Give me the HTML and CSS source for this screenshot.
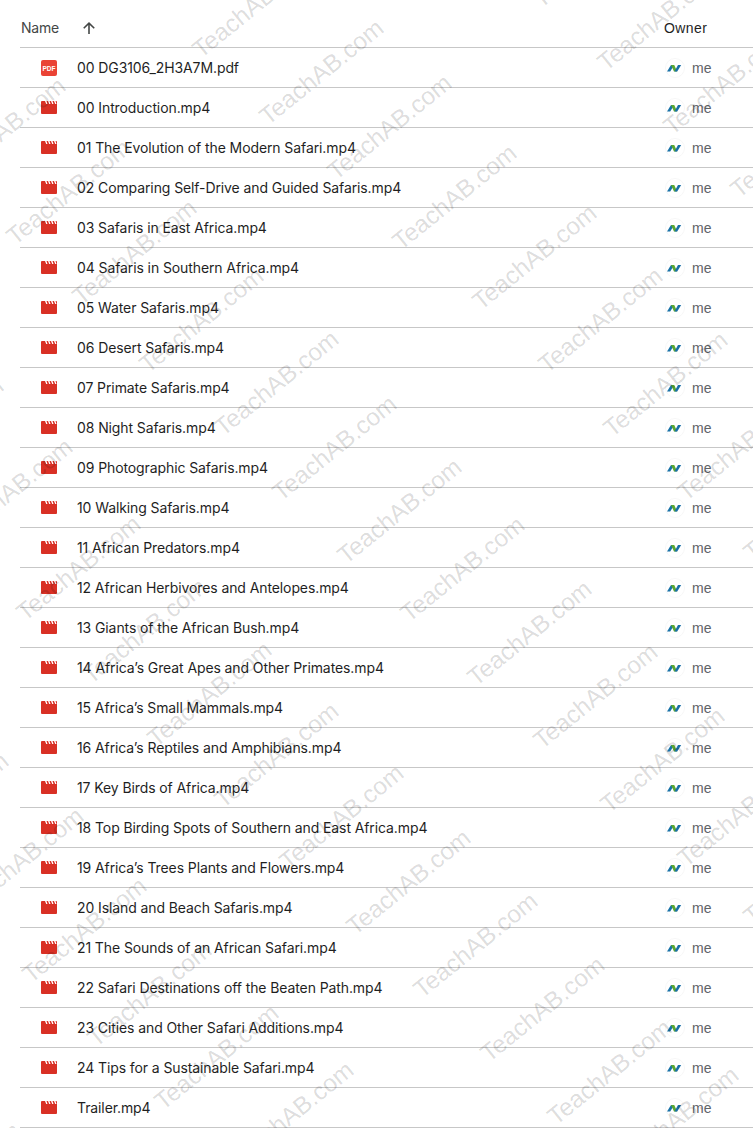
FILE: index.html
```html
<!DOCTYPE html>
<html lang="en">
<head>
    <meta charset="UTF-8">
    <meta name="viewport" content="width=device-width, initial-scale=1.0">
    <title>Safari course files</title>
    <link rel="stylesheet" href="styles.css">
</head>
<body>

    <!-- Shared icons -->
    <svg class="icon-defs" width="0" height="0" aria-hidden="true">
        <symbol id="iconVideo" viewBox="0 0 16 13">
            <path fill="#d93025" d="M1 0h14a1 1 0 0 1 1 1v11a1 1 0 0 1-1 1H1a1 1 0 0 1-1-1V1a1 1 0 0 1 1-1z"/>
            <path fill="#fff" d="M4 0h1.500l1 3H5.200zM7 0h1.500l1 3H8.200zM10 0h1.500l1 3h-1.300zM13 0h1.500l1 3h-1.300z"/>
        </symbol>
        <symbol id="iconOwner" viewBox="0 0 20 20">
            <circle cx="10" cy="10" r="9.500" fill="#fff" stroke="#f7f7f7"/>
            <path fill="#1a73a8" d="M2 13.500 6 7h3.200L5.200 13.500z"/>
            <path fill="#5aa832" d="M6 7h3.200l3 6.500H9z"/>
            <path fill="#1a6fa8" d="M9.500 13.500 13 7h3.200l-4 6.500z"/>
        </symbol>
    </svg>

    <div class="page">
        <!-- Column headers -->
        <div class="list-head">
            <div class="col-name">
                <span>Name</span>
                <svg class="sort-arrow" width="16" height="16" viewBox="0 0 16 16">
                    <path fill="#444746" d="M7.200 14V4.900L3.300 8.800 2.200 7.700 8 1.900l5.800 5.800-1.100 1.100-3.900-3.900V14z"/>
                </svg>
            </div>
            <div class="col-owner">Owner</div>
        </div>

        <!-- File rows -->
        <div class="row">
            <svg class="file-icon" width="16" height="16" viewBox="0 0 16 16">
                <rect width="16" height="16" rx="2" fill="#ea4335"/>
                <text class="pdf-label" x="8" y="10.500" text-anchor="middle">PDF</text>
            </svg>
            <span class="file-name">00 DG3106_2H3A7M.pdf</span>
            <div class="owner"><svg class="owner-icon"><use href="#iconOwner"/></svg><span>me</span></div>
        </div>
        <div class="row"><svg class="file-icon video"><use href="#iconVideo"/></svg><span class="file-name">00 Introduction.mp4</span><div class="owner"><svg class="owner-icon"><use href="#iconOwner"/></svg><span>me</span></div></div>
        <div class="row"><svg class="file-icon video"><use href="#iconVideo"/></svg><span class="file-name">01 The Evolution of the Modern Safari.mp4</span><div class="owner"><svg class="owner-icon"><use href="#iconOwner"/></svg><span>me</span></div></div>
        <div class="row"><svg class="file-icon video"><use href="#iconVideo"/></svg><span class="file-name">02 Comparing Self-Drive and Guided Safaris.mp4</span><div class="owner"><svg class="owner-icon"><use href="#iconOwner"/></svg><span>me</span></div></div>
        <div class="row"><svg class="file-icon video"><use href="#iconVideo"/></svg><span class="file-name">03 Safaris in East Africa.mp4</span><div class="owner"><svg class="owner-icon"><use href="#iconOwner"/></svg><span>me</span></div></div>
        <div class="row"><svg class="file-icon video"><use href="#iconVideo"/></svg><span class="file-name">04 Safaris in Southern Africa.mp4</span><div class="owner"><svg class="owner-icon"><use href="#iconOwner"/></svg><span>me</span></div></div>
        <div class="row"><svg class="file-icon video"><use href="#iconVideo"/></svg><span class="file-name">05 Water Safaris.mp4</span><div class="owner"><svg class="owner-icon"><use href="#iconOwner"/></svg><span>me</span></div></div>
        <div class="row"><svg class="file-icon video"><use href="#iconVideo"/></svg><span class="file-name">06 Desert Safaris.mp4</span><div class="owner"><svg class="owner-icon"><use href="#iconOwner"/></svg><span>me</span></div></div>
        <div class="row"><svg class="file-icon video"><use href="#iconVideo"/></svg><span class="file-name">07 Primate Safaris.mp4</span><div class="owner"><svg class="owner-icon"><use href="#iconOwner"/></svg><span>me</span></div></div>
        <div class="row"><svg class="file-icon video"><use href="#iconVideo"/></svg><span class="file-name">08 Night Safaris.mp4</span><div class="owner"><svg class="owner-icon"><use href="#iconOwner"/></svg><span>me</span></div></div>
        <div class="row"><svg class="file-icon video"><use href="#iconVideo"/></svg><span class="file-name">09 Photographic Safaris.mp4</span><div class="owner"><svg class="owner-icon"><use href="#iconOwner"/></svg><span>me</span></div></div>
        <div class="row"><svg class="file-icon video"><use href="#iconVideo"/></svg><span class="file-name">10 Walking Safaris.mp4</span><div class="owner"><svg class="owner-icon"><use href="#iconOwner"/></svg><span>me</span></div></div>
        <div class="row"><svg class="file-icon video"><use href="#iconVideo"/></svg><span class="file-name">11 African Predators.mp4</span><div class="owner"><svg class="owner-icon"><use href="#iconOwner"/></svg><span>me</span></div></div>
        <div class="row"><svg class="file-icon video"><use href="#iconVideo"/></svg><span class="file-name">12 African Herbivores and Antelopes.mp4</span><div class="owner"><svg class="owner-icon"><use href="#iconOwner"/></svg><span>me</span></div></div>
        <div class="row"><svg class="file-icon video"><use href="#iconVideo"/></svg><span class="file-name">13 Giants of the African Bush.mp4</span><div class="owner"><svg class="owner-icon"><use href="#iconOwner"/></svg><span>me</span></div></div>
        <div class="row"><svg class="file-icon video"><use href="#iconVideo"/></svg><span class="file-name">14 Africa’s Great Apes and Other Primates.mp4</span><div class="owner"><svg class="owner-icon"><use href="#iconOwner"/></svg><span>me</span></div></div>
        <div class="row"><svg class="file-icon video"><use href="#iconVideo"/></svg><span class="file-name">15 Africa’s Small Mammals.mp4</span><div class="owner"><svg class="owner-icon"><use href="#iconOwner"/></svg><span>me</span></div></div>
        <div class="row"><svg class="file-icon video"><use href="#iconVideo"/></svg><span class="file-name">16 Africa’s Reptiles and Amphibians.mp4</span><div class="owner"><svg class="owner-icon"><use href="#iconOwner"/></svg><span>me</span></div></div>
        <div class="row"><svg class="file-icon video"><use href="#iconVideo"/></svg><span class="file-name">17 Key Birds of Africa.mp4</span><div class="owner"><svg class="owner-icon"><use href="#iconOwner"/></svg><span>me</span></div></div>
        <div class="row"><svg class="file-icon video"><use href="#iconVideo"/></svg><span class="file-name">18 Top Birding Spots of Southern and East Africa.mp4</span><div class="owner"><svg class="owner-icon"><use href="#iconOwner"/></svg><span>me</span></div></div>
        <div class="row"><svg class="file-icon video"><use href="#iconVideo"/></svg><span class="file-name">19 Africa’s Trees Plants and Flowers.mp4</span><div class="owner"><svg class="owner-icon"><use href="#iconOwner"/></svg><span>me</span></div></div>
        <div class="row"><svg class="file-icon video"><use href="#iconVideo"/></svg><span class="file-name">20 Island and Beach Safaris.mp4</span><div class="owner"><svg class="owner-icon"><use href="#iconOwner"/></svg><span>me</span></div></div>
        <div class="row"><svg class="file-icon video"><use href="#iconVideo"/></svg><span class="file-name">21 The Sounds of an African Safari.mp4</span><div class="owner"><svg class="owner-icon"><use href="#iconOwner"/></svg><span>me</span></div></div>
        <div class="row"><svg class="file-icon video"><use href="#iconVideo"/></svg><span class="file-name">22 Safari Destinations off the Beaten Path.mp4</span><div class="owner"><svg class="owner-icon"><use href="#iconOwner"/></svg><span>me</span></div></div>
        <div class="row"><svg class="file-icon video"><use href="#iconVideo"/></svg><span class="file-name">23 Cities and Other Safari Additions.mp4</span><div class="owner"><svg class="owner-icon"><use href="#iconOwner"/></svg><span>me</span></div></div>
        <div class="row"><svg class="file-icon video"><use href="#iconVideo"/></svg><span class="file-name">24 Tips for a Sustainable Safari.mp4</span><div class="owner"><svg class="owner-icon"><use href="#iconOwner"/></svg><span>me</span></div></div>
        <div class="row"><svg class="file-icon video"><use href="#iconVideo"/></svg><span class="file-name">Trailer.mp4</span><div class="owner"><svg class="owner-icon"><use href="#iconOwner"/></svg><span>me</span></div></div>

        <!-- Watermark layer, lies over the list -->
        <svg class="watermark" width="753" height="1128" viewBox="0 0 753 1128" aria-hidden="true">
            <g transform="translate(8 4)">
                <text transform="translate(193 55) rotate(-39)">TeachAB.com</text>
                <text transform="translate(260 122) rotate(-39)">TeachAB.com</text>
                <text transform="translate(328 177) rotate(-39)">TeachAB.com</text>
                <text transform="translate(393 247) rotate(-39)">TeachAB.com</text>
                <text transform="translate(473 307) rotate(-39)">TeachAB.com</text>
                <text transform="translate(539 370) rotate(-39)">TeachAB.com</text>
                <text transform="translate(604 434) rotate(-39)">TeachAB.com</text>
                <text transform="translate(678 498) rotate(-39)">TeachAB.com</text>
                <text transform="translate(744 558) rotate(-39)">TeachAB.com</text>
                <text transform="translate(533 5) rotate(-39)">TeachAB.com</text>
                <text transform="translate(598 68) rotate(-39)">TeachAB.com</text>
                <text transform="translate(664 132) rotate(-39)">TeachAB.com</text>
                <text transform="translate(731 195) rotate(-39)">TeachAB.com</text>
                <text transform="translate(-58 180) rotate(-39)">TeachAB.com</text>
                <text transform="translate(7 242) rotate(-39)">TeachAB.com</text>
                <text transform="translate(73 302) rotate(-39)">TeachAB.com</text>
                <text transform="translate(140 370) rotate(-39)">TeachAB.com</text>
                <text transform="translate(215 433) rotate(-39)">TeachAB.com</text>
                <text transform="translate(273 498) rotate(-39)">TeachAB.com</text>
                <text transform="translate(338 561) rotate(-39)">TeachAB.com</text>
                <text transform="translate(401 619) rotate(-39)">TeachAB.com</text>
                <text transform="translate(468 683) rotate(-39)">TeachAB.com</text>
                <text transform="translate(534 746) rotate(-39)">TeachAB.com</text>
                <text transform="translate(601 810) rotate(-39)">TeachAB.com</text>
                <text transform="translate(678 864) rotate(-39)">TeachAB.com</text>
                <text transform="translate(744 922) rotate(-39)">TeachAB.com</text>
                <text transform="translate(-120 480) rotate(-39)">TeachAB.com</text>
                <text transform="translate(-51 541) rotate(-39)">TeachAB.com</text>
                <text transform="translate(17 618) rotate(-39)">TeachAB.com</text>
                <text transform="translate(83 681) rotate(-39)">TeachAB.com</text>
                <text transform="translate(148 744) rotate(-39)">TeachAB.com</text>
                <text transform="translate(215 805) rotate(-39)">TeachAB.com</text>
                <text transform="translate(280 867) rotate(-39)">TeachAB.com</text>
                <text transform="translate(347 932) rotate(-39)">TeachAB.com</text>
                <text transform="translate(414 995) rotate(-39)">TeachAB.com</text>
                <text transform="translate(481 1059) rotate(-39)">TeachAB.com</text>
                <text transform="translate(548 1122) rotate(-39)">TeachAB.com</text>
                <text transform="translate(615 1169) rotate(-39)">TeachAB.com</text>
                <text transform="translate(-115 855) rotate(-39)">TeachAB.com</text>
                <text transform="translate(-40 910) rotate(-39)">TeachAB.com</text>
                <text transform="translate(23 980) rotate(-39)">TeachAB.com</text>
                <text transform="translate(88 1044) rotate(-39)">TeachAB.com</text>
                <text transform="translate(155 1107) rotate(-39)">TeachAB.com</text>
                <text transform="translate(230 1164) rotate(-39)">TeachAB.com</text>
                <text transform="translate(-103 1225) rotate(-39)">TeachAB.com</text>
                <text transform="translate(286 1227) rotate(-39)">TeachAB.com</text>
            </g>
        </svg>
    </div>
</body>
</html>
```

FILE: styles.css
```css
/* Global Reset */
* {
    margin: 0;
    padding: 0;
    box-sizing: border-box;
}

body {
    background: #fff;
    font-family: 'Inter', 'Roboto', sans-serif;
    font-size: 14px;
    color: #1f1f1f;
}

.icon-defs {
    position: absolute;
}

.page {
    position: relative;
    width: 753px;
    height: 1128px;
    overflow: hidden;
}

/* Column headers */
.list-head {
    display: flex;
    align-items: center;
    justify-content: space-between;
    height: 48px;
    margin-left: 20px;
    padding-left: 1px;
    padding-top: 8px;
    border-bottom: 1px solid #c7c7c7;
}

.col-name {
    display: flex;
    align-items: center;
    gap: 22px;
    color: #444746;
    letter-spacing: -0.2px;
}

.col-owner {
    width: 89px;
    font-family: 'Liberation Sans', sans-serif;
    color: #1f1f1f;
    letter-spacing: 0.4px;
}

/* File rows */
.row {
    display: flex;
    align-items: center;
    height: 40px;
    margin-left: 20px;
    padding-left: 21px;
    border-bottom: 1px solid #c7c7c7;
}

.file-icon {
    flex: none;
    width: 16px;
    height: 16px;
    margin-right: 20px;
}

.file-icon.video {
    height: 13px;
}

.pdf-label {
    font-family: 'Liberation Sans', sans-serif;
    font-size: 6.5px;
    font-weight: 700;
    fill: #fff;
}

.file-name {
    flex: 1;
    color: #1f1f1f;
    letter-spacing: -0.1px;
    white-space: nowrap;
}

.owner {
    display: flex;
    align-items: center;
    gap: 7px;
    width: 88px;
    font-family: 'Liberation Sans', sans-serif;
    color: #5f6368;
}

.owner-icon {
    flex: none;
    width: 20px;
    height: 20px;
}

/* Watermark */
.watermark {
    position: absolute;
    top: 0;
    left: 0;
    pointer-events: none;
}

.watermark text {
    font-family: 'Liberation Sans', sans-serif;
    font-size: 24.5px;
    fill: rgba(0, 0, 0, 0.15);
}
```
